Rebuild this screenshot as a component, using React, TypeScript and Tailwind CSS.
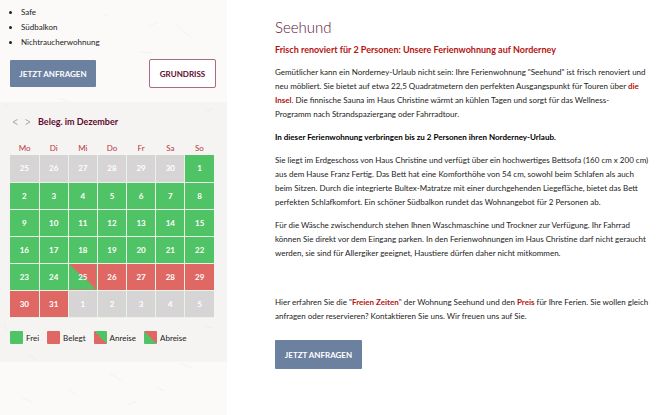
import React from "react";

type DayState = "off" | "free" | "busy" | "arrive";
type Day = { n: number; s: DayState };

const run = (from: number, to: number, s: DayState): Day[] =>
  Array.from({ length: to - from + 1 }, (_, i) => ({ n: from + i, s }));

const days: Day[] = [
  ...run(25, 30, "off"),
  ...run(1, 24, "free"),
  ...run(25, 25, "arrive"),
  ...run(26, 31, "busy"),
  ...run(1, 5, "off"),
];
const weeks = [0, 1, 2, 3, 4, 5].map((w) => days.slice(w * 7, w * 7 + 7));

const fill: Record<DayState, string> = {
  off: "bg-[#d6d4d4]",
  free: "bg-[#50c366]",
  busy: "bg-[#df6865]",
  arrive: "bg-[linear-gradient(to_top_right,#50c366_50%,#df6865_50%)]",
};

const legend = [
  { label: "Frei", c: "bg-[#50c366]" },
  { label: "Belegt", c: "bg-[#df6865]" },
  { label: "Anreise", c: "bg-[linear-gradient(to_top_right,#df6865_50%,#50c366_50%)]" },
  { label: "Abreise", c: "bg-[linear-gradient(to_top_right,#50c366_50%,#df6865_50%)]" },
];

function Fibres() {
  return (
    <svg className="pointer-events-none absolute inset-0 h-full w-full" aria-hidden="true" fill="none" stroke="#d9d5d0" strokeWidth="0.5" opacity="0.4">
      <path d="M176 25l17 14M148 27l9-5M140 52l12 1M29 34l4-4M60 98l8 4M206 112l7-4M5 105l4 2M180 363l12 5M28 355l9 5M110 374l12 6M157 388l8 3M22 398l10 4M204 326l8 2M4 324l3 6M128 405l9-4M70 390l6 5M103 14l5 3" />
    </svg>
  );
}

export default function App() {
  return (
    <div className="flex min-h-screen overflow-hidden bg-white font-['Lato','Open_Sans',sans-serif] text-[8px] leading-[14px] text-[#222222]">
      <aside className="relative w-[227px] shrink-0 bg-[#fbfaf9]">
        <div className="pr-[11px] pl-[10px]">
          <ul className="-mt-[10px] list-disc pl-[11px] leading-[15px]">
            <li>Flachbildfernseher</li>
            <li>Safe</li>
            <li>Südbalkon</li>
            <li>Nichtraucherwohnung</li>
          </ul>
          <div className="mt-[9px] flex items-center justify-between pb-[14px]">
            <button className="h-[27px] w-[86px] rounded-[1px] bg-[#6c809f] font-bold text-white">JETZT ANFRAGEN</button>
            <button className="h-[29px] w-[67px] rounded-[2px] border border-[#a86a86] bg-white font-bold text-[#5c0a2e]">GRUNDRISS</button>
          </div>
        </div>
        <section className="bg-[#f5f4f2] pt-[13px] pr-[13px] pb-[17px] pl-[10px]">
          <div className="flex items-center gap-[7px] px-[2px]">
            <button aria-label="Vorheriger Monat" className="text-[#aaa6a4]">
              <svg width="6" height="8" viewBox="0 0 6 8" fill="none" stroke="currentColor"><path d="M5.5 1.5L1 4l4.500 2.500" /></svg>
            </button>
            <button aria-label="Nächster Monat" className="text-[#aaa6a4]">
              <svg width="6" height="8" viewBox="0 0 6 8" fill="none" stroke="currentColor"><path d="M.5 1.500L5 4 .5 6.500" /></svg>
            </button>
            <h2 className="text-[9px] leading-[14px] font-bold text-[#5c0a2e]">Beleg. im Dezember</h2>
          </div>
          <table className="mt-[11px] w-full table-fixed border-collapse text-center">
            <thead>
              <tr className="h-[15px] text-[#b8383c]">
                {["Mo", "Di", "Mi", "Do", "Fr", "Sa", "So"].map((d) => (
                  <th key={d} scope="col" className="p-0 font-normal">{d}</th>
                ))}
              </tr>
            </thead>
            <tbody>
              {weeks.map((w, i) => (
                <tr key={i} className="h-[27px]">
                  {w.map((d, j) => (
                    <td key={j} className={`border-r border-b border-[#e6f3e6] p-0 font-bold text-white last:border-r-0 ${fill[d.s]}`}>{d.n}</td>
                  ))}
                </tr>
              ))}
            </tbody>
          </table>
          <ul className="mt-[13px] flex gap-[8px]">
            {legend.map((l) => (
              <li key={l.label} className="flex items-center gap-[3px]">
                <span className={`size-[13px] rounded-[1px] ${l.c}`} />
                {l.label}
              </li>
            ))}
          </ul>
        </section>
        <Fibres />
      </aside>
      <main className="min-w-0 flex-1 pl-[48px] whitespace-nowrap">
        <h1 className="mt-[18px] text-[15px] leading-[18px] font-light text-[#5c1238]">Seehund</h1>
        <h2 className="mt-[7px] text-[9px] leading-[14px] font-bold text-[#b5120f]">Frisch renoviert für 2 Personen: Unsere Ferienwohnung auf Norderney</h2>
        <div className="mt-[8px] flex flex-col gap-[9px]">
          <p>
            Gemütlicher kann ein Norderney-Urlaub nicht sein: Ihre Ferienwohnung "Seehund" ist frisch renoviert und<br />
            neu möbliert. Sie bietet auf etwa 22,5 Quadratmetern den perfekten Ausgangspunkt für Touren über <a href="#insel" className="font-bold text-[#b5120f]">die<br />
            Insel</a>. Die finnische Sauna im Haus Christine wärmt an kühlen Tagen und sorgt für das Wellness-<br />
            Programm nach Strandspaziergang oder Fahrradtour.
          </p>
          <p className="font-bold text-black">In dieser Ferienwohnung verbringen bis zu 2 Personen ihren Norderney-Urlaub.</p>
          <p>
            Sie liegt im Erdgeschoss von Haus Christine und verfügt über ein hochwertiges Bettsofa (160 cm x 200 cm)<br />
            aus dem Hause Franz Fertig. Das Bett hat eine Komforthöhe von 54 cm, sowohl beim Schlafen als auch<br />
            beim Sitzen. Durch die integrierte Bultex-Matratze mit einer durchgehenden Liegefläche, bietet das Bett<br />
            perfekten Schlafkomfort. Ein schöner Südbalkon rundet das Wohnangebot für 2 Personen ab.
          </p>
          <p>
            Für die Wäsche zwischendurch stehen Ihnen Waschmaschine und Trockner zur Verfügung. Ihr Fahrrad<br />
            können Sie direkt vor dem Eingang parken. In den Ferienwohnungen im Haus Christine darf nicht geraucht<br />
            werden, sie sind für Allergiker geeignet, Haustiere dürfen daher nicht mitkommen.
          </p>
        </div>
        <p className="mt-[35px]">
          Hier erfahren Sie die "<a href="#zeiten" className="font-bold text-[#b5120f]">Freien Zeiten</a>" der Wohnung Seehund und den <a href="#preis" className="font-bold text-[#b5120f]">Preis</a> für Ihre Ferien. Sie wollen gleich<br />
          anfragen oder reservieren? Kontaktieren Sie uns. Wir freuen uns auf Sie.
        </p>
        <button className="mt-[17px] h-[29px] w-[87px] rounded-[1px] bg-[#6c809f] font-bold text-white">JETZT ANFRAGEN</button>
      </main>
    </div>
  );
}
